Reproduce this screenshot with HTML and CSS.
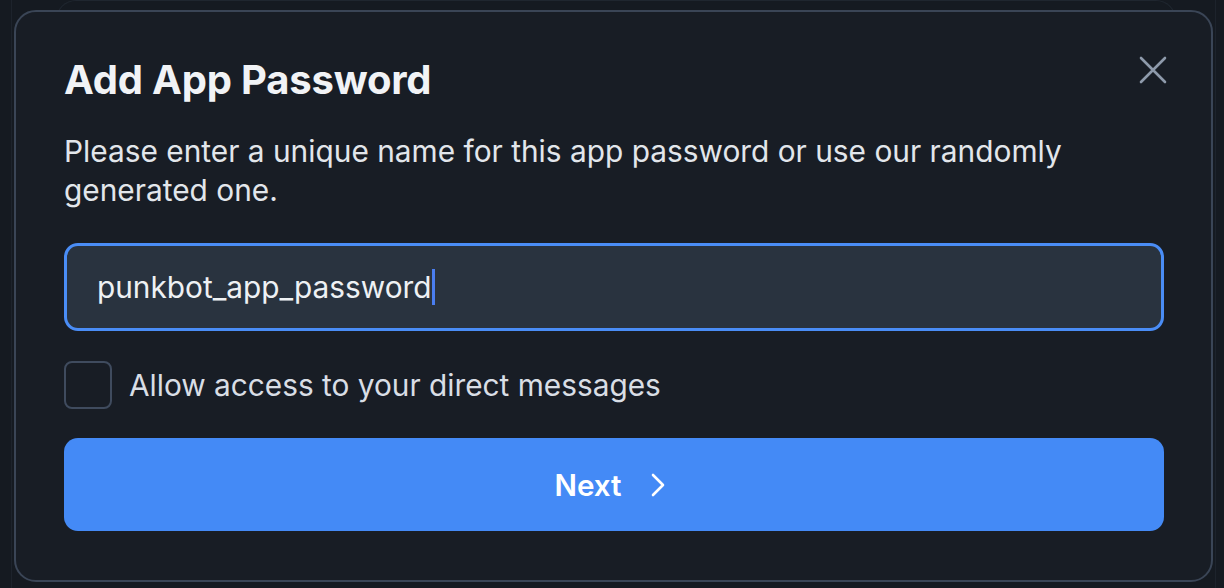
FILE: index.html
```html
<!DOCTYPE html>
<html lang="en">
<head>
<meta charset="utf-8">
<title>Add App Password</title>
<link rel="stylesheet" href="styles.css">
</head>
<body>
<div class="page">
  <div class="ghost"></div>
  <div class="modal">
    <button class="close" aria-label="Close">
      <svg width="28" height="28" viewBox="0 0 28 28" fill="none"><path d="M2 2L26 26M26 2L2 26" stroke="#8e9aab" stroke-width="2.6" stroke-linecap="round"/></svg>
    </button>
    <h1 class="title">Add App Password</h1>
    <p class="desc">Please enter a unique name for this app password or use our randomly generated one.</p>
    <div class="input"><span class="value">punkbot_app_password</span><span class="caret"></span></div>
    <label class="check-row"><span class="box"></span><span class="check-label">Allow access to your direct messages</span></label>
    <button class="next"><span>Next</span><svg width="16" height="26" viewBox="0 0 16 26" fill="none"><path d="M3 3L13 13L3 23" stroke="#fff" stroke-width="2.6" stroke-linecap="round" stroke-linejoin="round"/></svg></button>
  </div>
</div>
</body>
</html>
```

FILE: styles.css
```css
* { box-sizing: border-box; }
html, body { margin: 0; padding: 0; }
body {
  background: #151a21;
  font-family: Inter, "Noto Sans", sans-serif;
  width: 1224px;
  height: 588px;
  overflow: hidden;
}
.page {
  position: relative;
  margin-left: 11px;
  width: 1205px;
  height: 588px;
  border-left: 1px solid #1d232c;
  border-right: 1px solid #1d232c;
  padding: 10px 0 0 2px;
}
.ghost {
  position: absolute;
  left: 44px;
  top: 0;
  width: 1120px;
  height: 60px;
  border: 1px solid #1f262f;
  border-bottom: none;
  border-radius: 20px 20px 0 0;
}
.modal {
  position: relative;
  width: 1199px;
  height: 572px;
  background: #181d25;
  border: 2px solid #3a4556;
  border-radius: 22px;
  padding: 44px 47px 0 48px;
  display: flex;
  flex-direction: column;
}
.close {
  position: absolute;
  top: 44px;
  right: 44px;
  width: 28px;
  height: 28px;
  padding: 0;
  border: none;
  background: none;
  display: flex;
}
.title {
  margin: 0;
  font-size: 40px;
  line-height: 48px;
  font-weight: 700;
  color: #f1f3f6;
  letter-spacing: -0.2px;
}
.desc {
  margin: 28px 0 0;
  font-size: 29.85px;
  line-height: 39px;
  color: #e2e6eb;
  max-width: 1080px;
}
.input {
  margin-top: 33px;
  height: 88px;
  flex: none;
  border: 3px solid #4a8df6;
  border-radius: 14px;
  background: #29333f;
  padding-left: 30px;
  display: flex;
  align-items: center;
  font-size: 29.8px;
  color: #eef1f4;
}
.caret {
  width: 3px;
  height: 36px;
  background: #4a7ef0;
}
.check-row {
  margin-top: 30px;
  display: flex;
  align-items: center;
  gap: 17px;
}
.box {
  width: 48px;
  height: 48px;
  border: 2px solid #3f4b5e;
  border-radius: 8px;
}
.check-label {
  font-size: 29.8px;
  color: #d9dee5;
}
.next {
  margin-top: 29px;
  height: 93px;
  flex: none;
  border: none;
  border-radius: 14px;
  background: #448af6;
  color: #fff;
  font-family: inherit;
  font-size: 29.6px;
  font-weight: 600;
  display: flex;
  align-items: center;
  justify-content: center;
  gap: 28px;
  padding: 0;
}
.next svg { margin-top: 1px; margin-right: 8px; }
```
